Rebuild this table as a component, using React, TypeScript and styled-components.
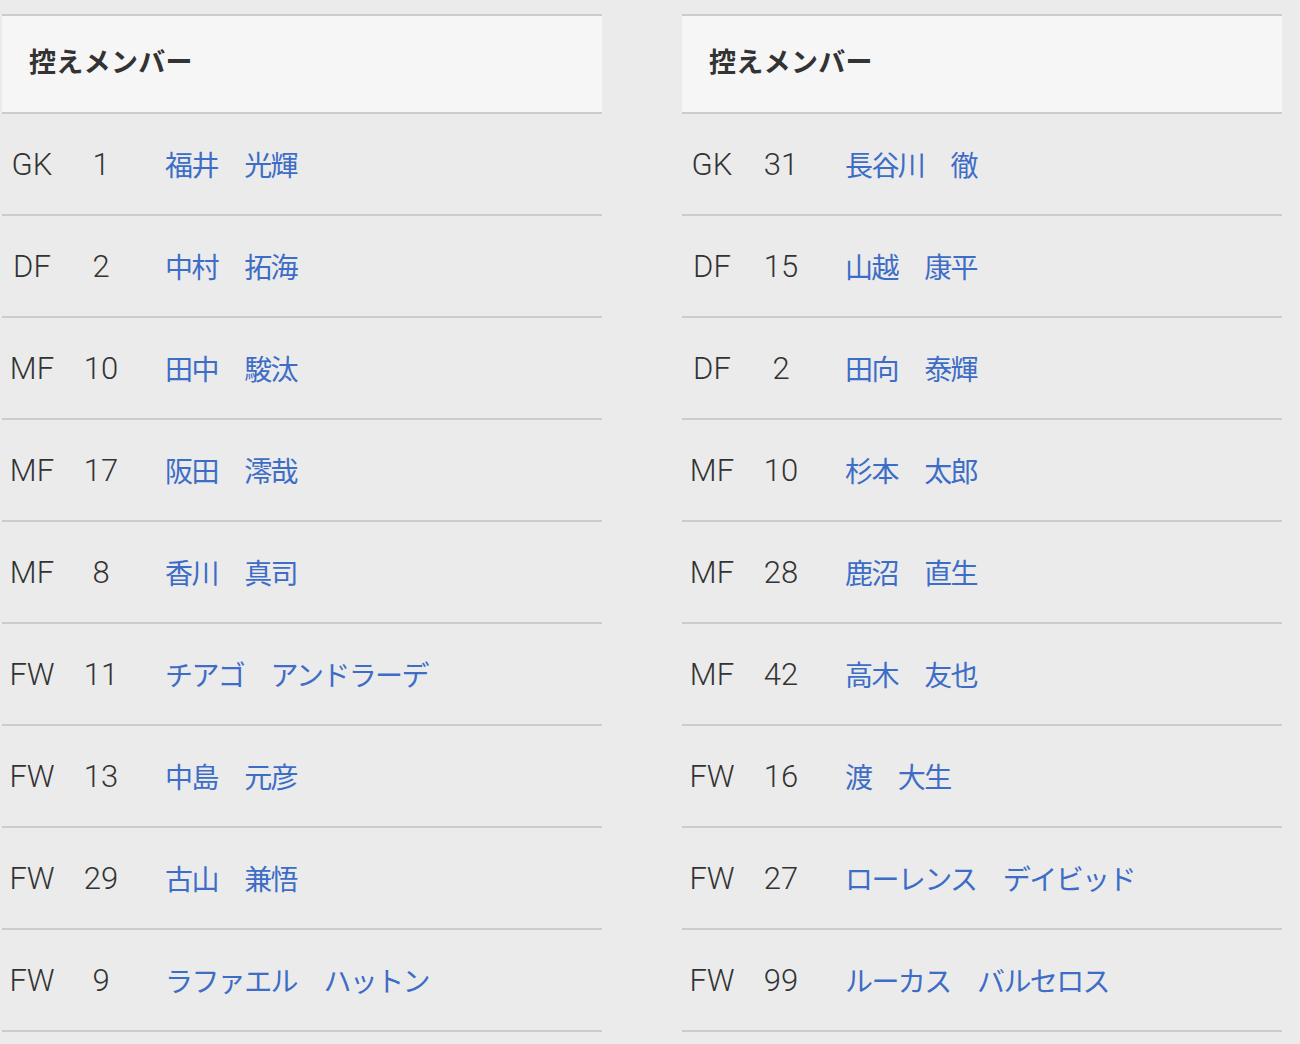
import React, { FC } from 'react'
import styled, { createGlobalStyle } from 'styled-components'

const GlobalStyle = createGlobalStyle`
	html, body {
		margin: 0;
		padding: 0;
		background: #ebebeb;
	}
	body {
		font-family: Roboto, "Noto Sans CJK JP", sans-serif;
		color: #333;
	}
`

const Page = styled.div`
	display: flex;
	gap: 80px;
	padding: 14px 0 0 2px;
	min-height: 1044px;
	box-sizing: border-box;
`

const Table = styled.section`
	width: 600px;
	display: flex;
	flex-direction: column;
	border-top: 2px solid #cccccc;
`

const Header = styled.h3`
	margin: 0;
	height: 98px;
	box-sizing: border-box;
	display: flex;
	align-items: center;
	padding: 0 0 8px 27px;
	background: #f6f6f6;
	border-bottom: 2px solid #cccccc;
	font-family: "Noto Sans CJK JP", sans-serif;
	font-size: 27px;
	font-weight: 700;
	color: #333;
	letter-spacing: 0.3px;
`

const Row = styled.div`
	height: 100px;
	display: flex;
	align-items: center;
	border-bottom: 2px solid #cccccc;
`

const Position = styled.span`
	width: 60px;
	text-align: center;
	font-size: 31px;
	font-weight: 300;
	color: #333;
`

const Number = styled.span`
	width: 78px;
	text-align: center;
	font-size: 31px;
	font-weight: 300;
	color: #333;
`

const Name = styled.a`
	padding-left: 25px;
	font-family: "Noto Sans CJK JP", sans-serif;
	font-size: 28px;
	letter-spacing: -1.6px;
	color: #3d6dc6;
	text-decoration: none;
`

interface Player {
	pos: string
	no: string
	name: string
}

const left: Player[] = [
	{ pos: 'GK', no: '1', name: '福井　光輝' },
	{ pos: 'DF', no: '2', name: '中村　拓海' },
	{ pos: 'MF', no: '10', name: '田中　駿汰' },
	{ pos: 'MF', no: '17', name: '阪田　澪哉' },
	{ pos: 'MF', no: '8', name: '香川　真司' },
	{ pos: 'FW', no: '11', name: 'チアゴ　アンドラーデ' },
	{ pos: 'FW', no: '13', name: '中島　元彦' },
	{ pos: 'FW', no: '29', name: '古山　兼悟' },
	{ pos: 'FW', no: '9', name: 'ラファエル　ハットン' },
]

const right: Player[] = [
	{ pos: 'GK', no: '31', name: '長谷川　徹' },
	{ pos: 'DF', no: '15', name: '山越　康平' },
	{ pos: 'DF', no: '2', name: '田向　泰輝' },
	{ pos: 'MF', no: '10', name: '杉本　太郎' },
	{ pos: 'MF', no: '28', name: '鹿沼　直生' },
	{ pos: 'MF', no: '42', name: '高木　友也' },
	{ pos: 'FW', no: '16', name: '渡　大生' },
	{ pos: 'FW', no: '27', name: 'ローレンス　デイビッド' },
	{ pos: 'FW', no: '99', name: 'ルーカス　バルセロス' },
]

const SubsTable: FC<{ players: Player[] }> = ({ players }) => (
	<Table>
		<Header>控えメンバー</Header>
		{players.map((p, i) => (
			<Row key={i}>
				<Position>{p.pos}</Position>
				<Number>{p.no}</Number>
				<Name href="#">{p.name}</Name>
			</Row>
		))}
	</Table>
)

const App: FC = () => (
	<>
		<GlobalStyle />
		<Page>
			<SubsTable players={left} />
			<SubsTable players={right} />
		</Page>
	</>
)

export default App
